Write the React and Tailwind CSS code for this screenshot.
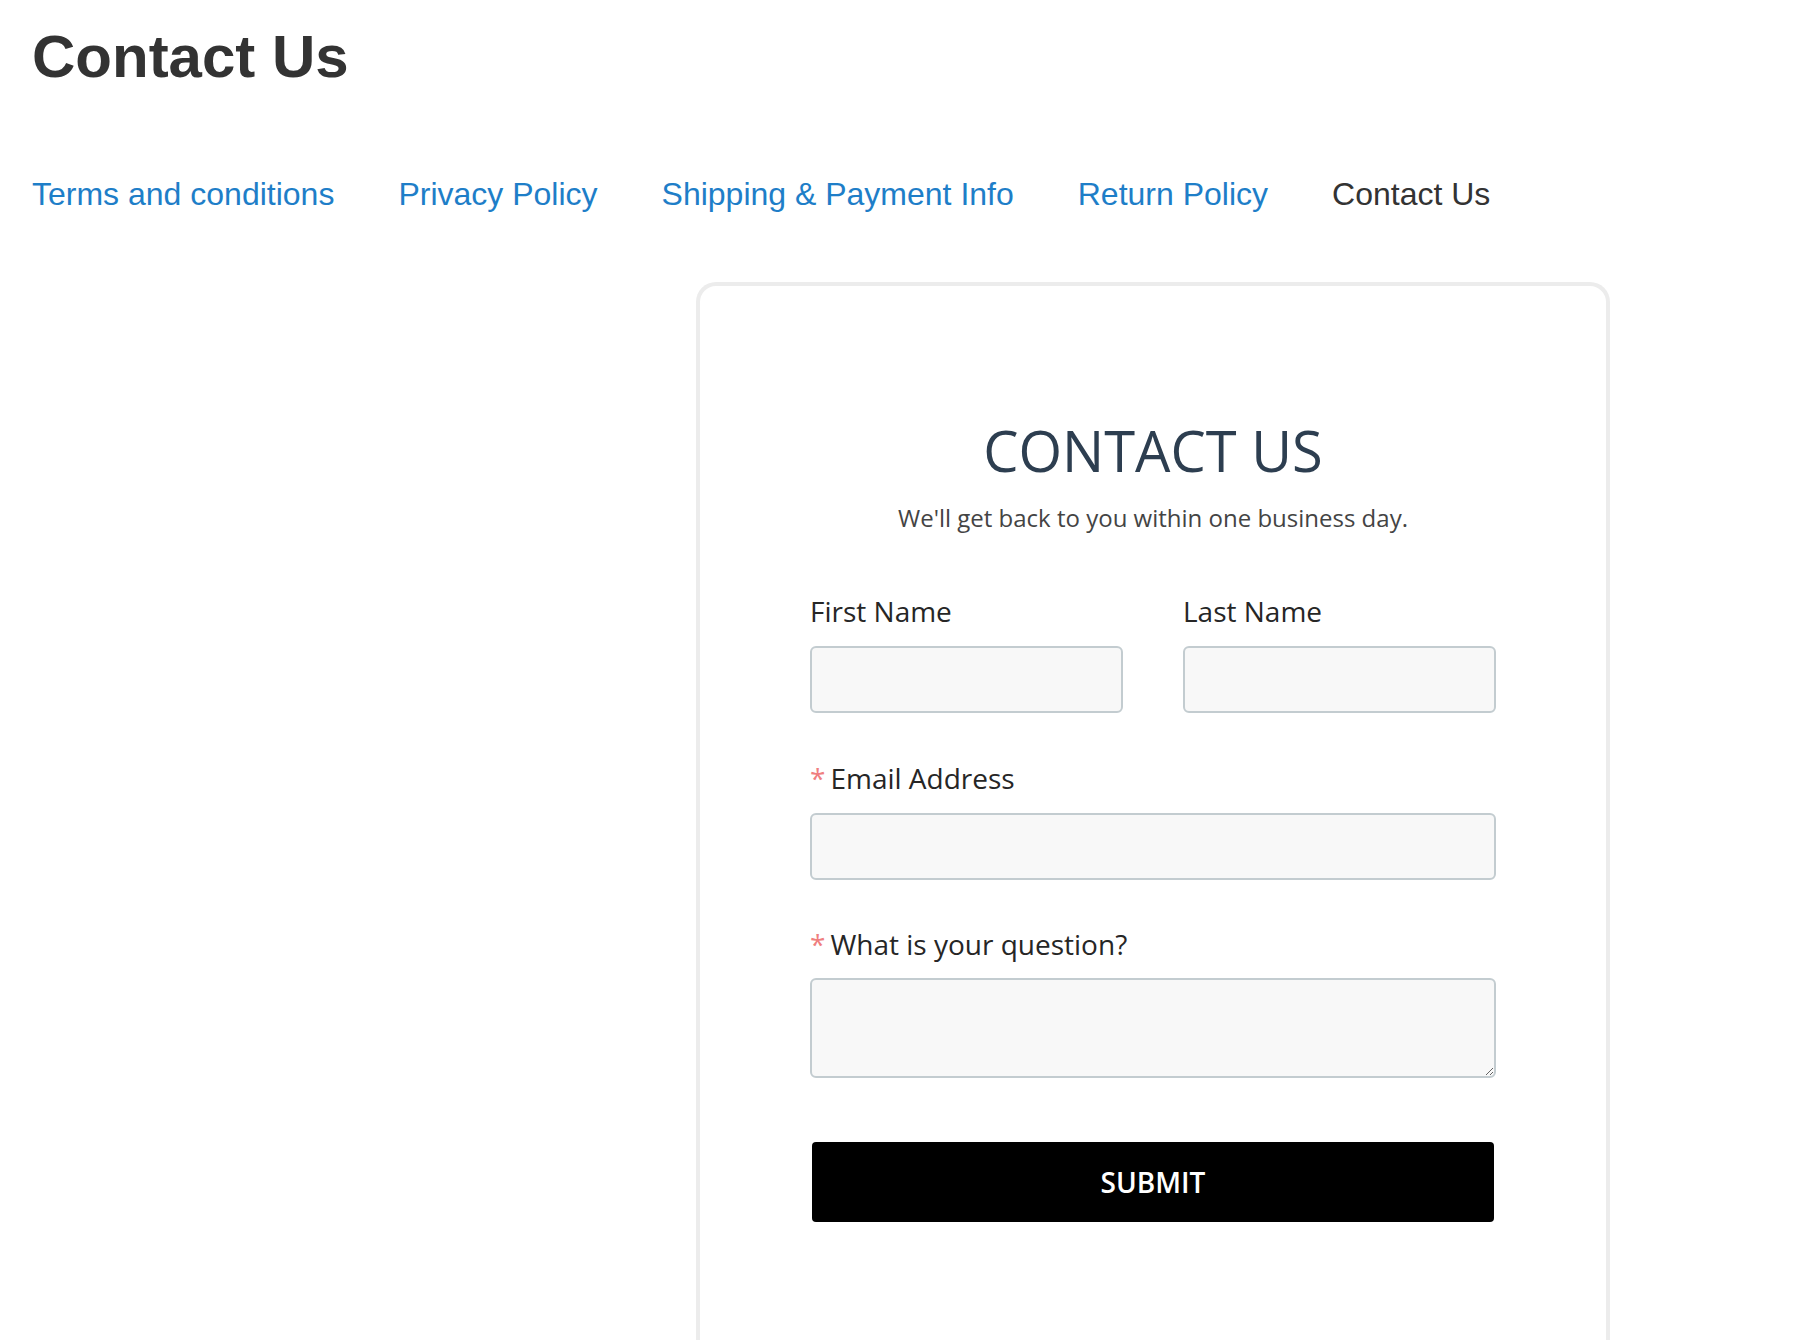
import { useState } from 'react';

const navLinks = [
  { label: 'Terms and conditions', active: false },
  { label: 'Privacy Policy', active: false },
  { label: 'Shipping & Payment Info', active: false },
  { label: 'Return Policy', active: false },
  { label: 'Contact Us', active: true },
];

const inputClass =
  'w-full rounded-[6px] border-2 border-[#c3ccd0] bg-[#f8f8f8] px-4 outline-none';

const Label = ({ children, required }) => (
  <label className="block text-[28px] leading-[40px] font-medium text-[#262626]">
    {required && <span className="mr-[5px] text-[#ef7f7f]">*</span>}
    {children}
  </label>
);

const App = () => {
  const [form, setForm] = useState({ first: '', last: '', email: '', question: '' });

  const change = (key) => (e) => setForm({ ...form, [key]: e.target.value });

  const submitHandler = (e) => {
    e.preventDefault();
  };

  return (
    <div className="min-h-screen bg-white pl-[32px] font-['Liberation_Sans',Arial,sans-serif]">
      <h1 className="pt-[21px] text-[60px] leading-[72px] font-bold text-[#333]">Contact Us</h1>

      {/* Policy pages */}
      <nav className="mt-[81px] flex gap-[64px] text-[32px] leading-[40px]">
        {navLinks.map((link) => (
          <a
            key={link.label}
            href="#"
            className={link.active ? 'text-[#333]' : 'text-[#1e7ec8] hover:underline'}
          >
            {link.label}
          </a>
        ))}
      </nav>

      {/* Form card */}
      <div className="mt-[68px] ml-[664px] w-[914px] rounded-t-[20px] border-4 border-b-0 border-[#ececec] px-[110px] pt-[131px] pb-[220px] font-['Open_Sans','Noto_Sans',sans-serif]">
        <h2 className="text-center text-[56px] leading-[67px] font-normal text-[#2d3e50]">CONTACT US</h2>
        <p className="mt-[16px] text-center text-[24px] leading-[36px] text-[#444]">
          We'll get back to you within one business day.
        </p>

        <form onSubmit={submitHandler}>
          <div className="mt-[55px] grid grid-cols-2 gap-[60px]">
            <div>
              <Label>First Name</Label>
              <input
                value={form.first}
                onChange={change('first')}
                className={`${inputClass} mt-[15px] h-[67px]`}
              />
            </div>
            <div>
              <Label>Last Name</Label>
              <input
                value={form.last}
                onChange={change('last')}
                className={`${inputClass} mt-[15px] h-[67px]`}
              />
            </div>
          </div>

          <div className="mt-[45px]">
            <Label required>Email Address</Label>
            <input
              type="email"
              value={form.email}
              onChange={change('email')}
              className={`${inputClass} mt-[15px] h-[67px]`}
            />
          </div>

          <div className="mt-[44px]">
            <Label required>What is your question?</Label>
            <textarea
              value={form.question}
              onChange={change('question')}
              className={`${inputClass} mt-[14px] block h-[100px] py-3`}
            />
          </div>

          <div className="mt-[64px] px-[2px]">
            <button
              type="submit"
              className="h-[80px] w-full rounded-[4px] bg-black text-[28px] font-semibold text-white"
            >
              SUBMIT
            </button>
          </div>
        </form>
      </div>
    </div>
  );
};

export default App;
